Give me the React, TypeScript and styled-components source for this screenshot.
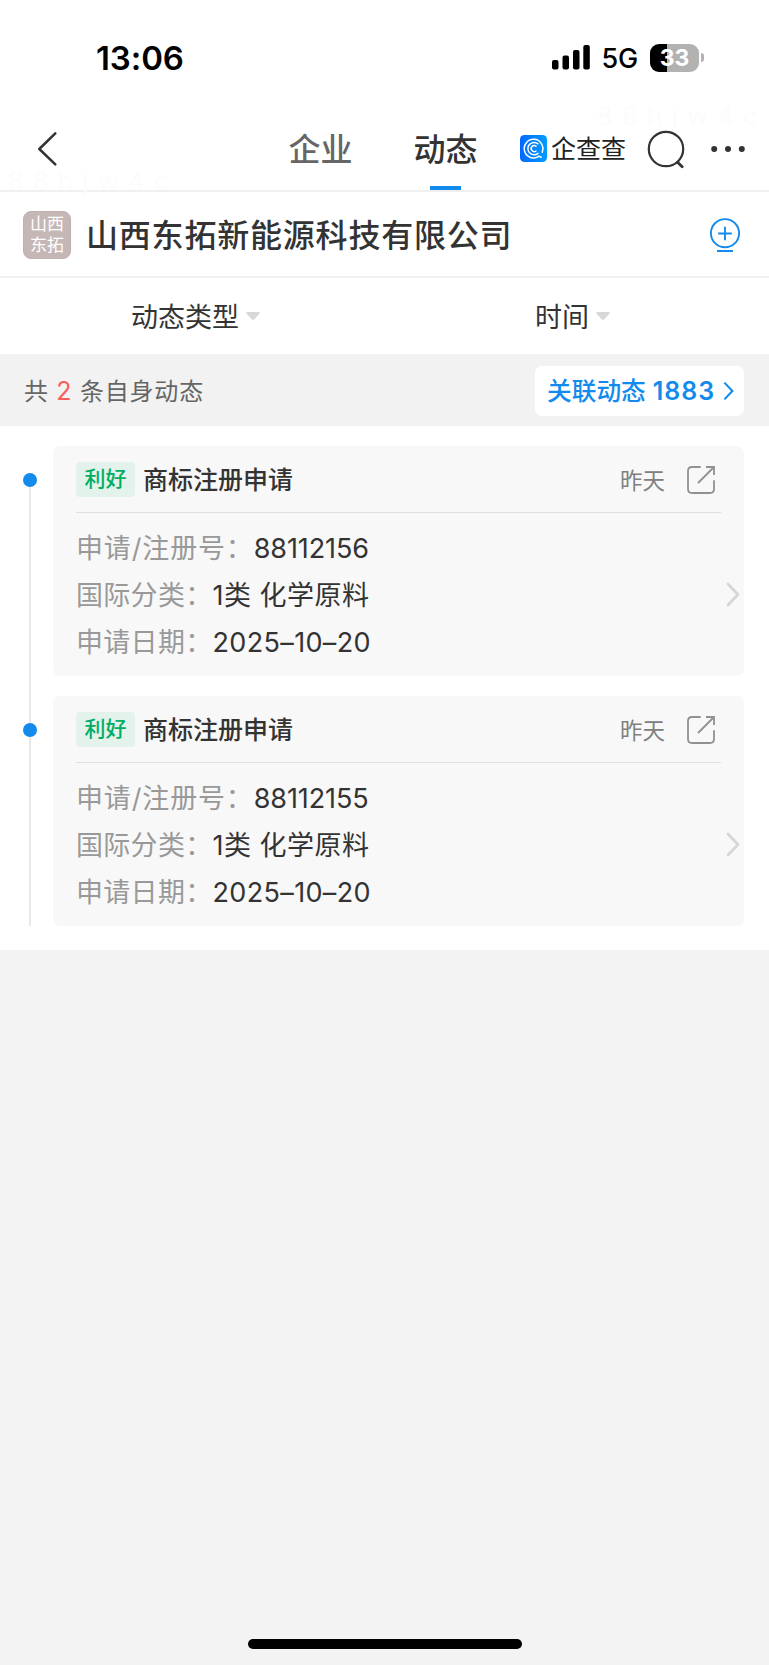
import React from "react";
import styled, { createGlobalStyle } from "styled-components";

const Global = createGlobalStyle`
  * { box-sizing: border-box; }
  html, body { margin: 0; padding: 0; background: #f3f3f3; }
  body { font-family: Inter, "Noto Sans CJK SC", sans-serif; color: #333; }
  svg { flex: none; }
`;

const blue = "#128bed";

const Screen = styled.div`
  width: 769px;
  height: 1665px;
  display: flex;
  flex-direction: column;
  background: #f3f3f3;
  overflow: hidden;
  position: relative;
  white-space: nowrap;
`;

const StatusBar = styled.div`
  height: 106px;
  flex: none;
  padding: 9px 65px 0 96px;
  display: flex;
  align-items: center;
  justify-content: space-between;
  background: #fff;
  color: #000;
`;

const Clock = styled.div`
  font-size: 33px;
  font-weight: 600;
  letter-spacing: -0.1px;
`;

const StatusIcons = styled.div`
  display: flex;
  align-items: center;
`;

const Network = styled.span`
  font-size: 27px;
  font-weight: 500;
  letter-spacing: -0.2px;
  margin: 2px 12px 0 12px;
`;

const Battery = styled.div`
  width: 49px;
  height: 28px;
  border-radius: 9px;
  background: linear-gradient(90deg, #000 0 16.5px, #b2b2b2 16.5px);
  color: #fff;
  font-size: 23px;
  font-weight: 700;
  line-height: 28px;
  text-align: center;
`;

const BatteryTip = styled.div`
  width: 3px;
  height: 9px;
  margin-left: 2px;
  border-radius: 0 3px 3px 0;
  background: #b2b2b2;
`;

const NavBar = styled.div`
  height: 86px;
  flex: none;
  display: flex;
  background: #fff;
  border-bottom: 2px solid #f0f0f0;
`;

const BackButton = styled.div`
  width: 258px;
  padding: 25px 0 0 37px;
`;

const Tab = styled.div<{ $active?: boolean }>`
  width: 125px;
  display: flex;
  flex-direction: column;
  align-items: center;
  justify-content: space-between;
  font-size: 32px;
  line-height: 46px;
  font-weight: 500;
  padding-top: 21px;
  color: ${(p) => (p.$active ? "#333" : "#666")};
  &::after {
    content: "";
    width: 31px;
    height: 4px;
    background: ${(p) => (p.$active ? blue : "transparent")};
  }
`;

const NavActions = styled.div`
  display: flex;
  align-items: center;
  height: 85px;
  padding-left: 12px;
`;

const BrandName = styled.span`
  width: 76px;
  margin: 0 19px 0 4px;
  font-size: 25px;
  line-height: 30px;
  color: #222;
`;

const SearchButton = styled.div`
  display: flex;
  margin-right: 24px;
`;

const CompanyBar = styled.div`
  height: 86px;
  flex: none;
  display: flex;
  align-items: center;
  padding: 1px 28px 0 23px;
  background: #fff;
  border-bottom: 2px solid #f0f0f0;
`;

const Avatar = styled.div`
  width: 48px;
  height: 48px;
  border-radius: 8px;
  border: 1px solid #bfb0b0;
  background: #c6b7b7;
  color: #fff;
  font-size: 17px;
  line-height: 21px;
  padding-top: 2px;
  text-align: center;
`;

const CompanyName = styled.h1`
  margin: 3px auto 0 15px;
  font-size: 32px;
  line-height: 46px;
  letter-spacing: 0.8px;
  font-weight: 500;
`;

const Filters = styled.div`
  height: 76px;
  flex: none;
  display: flex;
  padding-left: 131px;
  background: #fff;
`;

const Filter = styled.div`
  width: 404px;
  flex: none;
  display: flex;
  align-items: center;
  gap: 7px;
  font-size: 27px;
`;

const FilterName = styled.span`
  margin-top: -2px;
`;

const SummaryBar = styled.div`
  height: 72px;
  flex: none;
  display: flex;
  align-items: center;
  justify-content: space-between;
  padding: 0 25px 0 24px;
  background: #f2f2f2;
  color: #666;
  font-size: 24px;
`;

const Count = styled.em`
  font-style: normal;
  color: #fc5c5c;
  font-size: 25px;
`;

const Summary = styled.span`
  letter-spacing: 0.8px;
  margin-top: -2px;
`;

const RelatedButton = styled.div`
  width: 209px;
  height: 50px;
  margin-top: 1px;
  border-radius: 7px;
  background: #fff;
  color: ${blue};
  display: flex;
  align-items: center;
  padding-left: 12px;
  font-weight: 500;
  font-size: 24.7px;
`;

const RelatedLabel = styled.span`
  margin-top: -3px;
`;

const RelatedCount = styled.span`
  width: 70px;
  margin-left: 7px;
  font-weight: 600;
  font-size: 25px;
  letter-spacing: 1px;
`;

const Timeline = styled.div`
  flex: none;
  background: #fff;
  padding: 20px 25px 24px 23px;
`;

const Entry = styled.div`
  display: flex;
  gap: 16px;
  &:not(:last-child) { padding-bottom: 20px; }
  &:not(:last-child) > :first-child { margin-bottom: -47px; }
`;

const Rail = styled.div`
  width: 14px;
  margin-top: 27px;
  display: flex;
  flex-direction: column;
  align-items: center;
  &::before {
    content: "";
    width: 14px;
    height: 14px;
    border-radius: 50%;
    background: ${blue};
  }
  &::after {
    content: "";
    flex: 1;
    width: 2px;
    background: #e9e9e9;
  }
`;

const Card = styled.div`
  width: 691px;
  height: 230px;
  border-radius: 7px;
  background: #f8f8f8;
  padding: 0 23px;
`;

const CardHead = styled.div`
  height: 67px;
  display: flex;
  align-items: center;
  padding-right: 6px;
  border-bottom: 1px solid #dfdfdf;
`;

const Tag = styled.span`
  width: 59px;
  height: 35px;
  border-radius: 4px;
  background: #e3f2eb;
  color: #00ad65;
  font-size: 21px;
  line-height: 34px;
  font-weight: 500;
  text-align: center;
`;

const CardTitle = styled.span`
  margin: -2px auto 0 8px;
  font-size: 25px;
  font-weight: 500;
`;

const When = styled.span`
  margin: 0 22px 0 0;
  font-size: 22.5px;
  color: #808080;
`;

const ShareButton = styled.span`
  display: flex;
  margin-top: 2px;
`;

const CardBody = styled.div`
  display: flex;
  align-items: center;
  justify-content: space-between;
  padding-top: 12px;
  margin-right: -19px;
`;

const Field = styled.div`
  height: 47px;
  line-height: 47px;
  font-size: 27px;
  display: flex;
`;

const Label = styled.span<{ $spacing?: number }>`
  color: #999;
  letter-spacing: ${(p) => p.$spacing ?? 0.3}px;
`;

const Value = styled.span<{ $spacing?: number }>`
  letter-spacing: ${(p) => p.$spacing ?? 0}px;
`;

const ArrowSlot = styled.span`
  display: flex;
  margin-bottom: 3px;
`;

const HomeIndicator = styled.div`
  width: 274px;
  height: 10px;
  border-radius: 5px;
  background: #000;
  margin: auto auto 16px 247.5px;
`;

const Watermark = styled.span<{ $x: number; $y: number }>`
  position: absolute;
  left: ${(p) => p.$x}px;
  top: ${(p) => p.$y}px;
  font-size: 25px;
  line-height: 30px;
  letter-spacing: 9.6px;
  color: #fcfcfc;
`;

const SignalIcon = () => (
  <svg width="38" height="25" viewBox="0 0 38 25">
    <rect x="0" y="15" width="6.5" height="9.5" rx="2" />
    <rect x="10.5" y="10.5" width="6.5" height="14" rx="2" />
    <rect x="21" y="5" width="6.5" height="19.5" rx="2" />
    <rect x="31.3" y="0" width="6.5" height="24.5" rx="2" />
  </svg>
);

const BackIcon = () => (
  <svg width="20" height="36" viewBox="0 0 20 36" fill="none" stroke="#333" strokeWidth="2.5" strokeLinecap="round" strokeLinejoin="round">
    <path d="M18.3 2.3 2.3 18 18.3 33.3" />
  </svg>
);

const BrandIcon = () => (
  <svg width="27" height="27" viewBox="0 0 27 27" fill="none" stroke="#fff" strokeWidth="1.5" strokeLinecap="round">
    <defs>
      <linearGradient id="brand" x1="0" x2="1">
        <stop offset="0" stopColor="#0068ff" />
        <stop offset="1" stopColor="#009dff" />
      </linearGradient>
    </defs>
    <rect width="27" height="27" rx="4.5" fill="url(#brand)" stroke="none" />
    <path d="M19 21.2A9.3 9.3 0 1 1 22.2 17.1M19 21.2l2.2 1" />
    <path d="M18 8.8A6.2 6.2 0 1 0 18 18.4" />
    <path d="M16 11.2A3 3 0 1 0 16 16" />
  </svg>
);

const SearchIcon = () => (
  <svg width="40" height="40" viewBox="0 0 40 40" fill="none" stroke="#333" strokeWidth="2.2" strokeLinecap="round">
    <circle cx="20" cy="20" r="17.2" />
    <path d="M31.6 33.2 36.2 37.8" strokeWidth="2.8" />
  </svg>
);

const MoreIcon = () => (
  <svg width="36" height="8" viewBox="0 0 36 8" fill="#333">
    <circle cx="4.2" cy="4" r="3" />
    <circle cx="18" cy="4" r="3" />
    <circle cx="31.8" cy="4" r="3" />
  </svg>
);

const FollowIcon = () => (
  <svg width="32" height="36" viewBox="0 0 32 36" fill="none" stroke={blue} strokeWidth="1.9">
    <circle cx="16" cy="16.2" r="14.1" />
    <path d="M9.2 16.5H22.8M16 9.7V23.3M8 34H24" />
  </svg>
);

const CaretIcon = () => (
  <svg width="14" height="8" viewBox="0 0 14 8" fill="#d8d8d8">
    <path d="M.8 0H13.2Q14.4.6 13.6 1.6L8.3 7.2Q7 8.4 5.7 7.2L.4 1.6Q-.4.6.8 0Z" />
  </svg>
);

const RelatedArrow = () => (
  <svg width="11" height="20" viewBox="0 0 11 20" fill="none" stroke={blue} strokeWidth="2.1">
    <path d="M1.4 1.6 9.4 10 1.4 18.4" />
  </svg>
);

const ShareIcon = () => (
  <svg width="28" height="28" viewBox="0 0 28 28" fill="none" stroke="#919191" strokeWidth="1.8">
    <path d="M13.7 1H5Q1 1 1 5V23Q1 27 5 27H23Q27 27 27 23V14.3" />
    <path d="M19 1H27V9M27 1 11 17" />
  </svg>
);

const CardArrow = () => (
  <svg width="14" height="25" viewBox="0 0 14 25" fill="none" stroke="#d6d6d6" strokeWidth="2.7" strokeLinecap="round" strokeLinejoin="round">
    <path d="M2 2 12 12.5 2 23" />
  </svg>
);

const records = ["88112156", "88112155"];

export default function App() {
  return (
    <Screen>
      <Global />
      <StatusBar>
        <Clock>13:06</Clock>
        <StatusIcons>
          <SignalIcon />
          <Network>5G</Network>
          <Battery>33</Battery>
          <BatteryTip />
        </StatusIcons>
      </StatusBar>
      <NavBar>
        <BackButton><BackIcon /></BackButton>
        <Tab>企业</Tab>
        <Tab $active>动态</Tab>
        <NavActions>
          <BrandIcon />
          <BrandName>企查查</BrandName>
          <SearchButton><SearchIcon /></SearchButton>
          <MoreIcon />
        </NavActions>
      </NavBar>
      <CompanyBar>
        <Avatar>山西<br />东拓</Avatar>
        <CompanyName>山西东拓新能源科技有限公司</CompanyName>
        <FollowIcon />
      </CompanyBar>
      <Filters>
        <Filter><FilterName>动态类型</FilterName><CaretIcon /></Filter>
        <Filter><FilterName>时间</FilterName><CaretIcon /></Filter>
      </Filters>
      <SummaryBar>
        <Summary>共 <Count>2</Count> 条自身动态</Summary>
        <RelatedButton>
          <RelatedLabel>关联动态</RelatedLabel>
          <RelatedCount>1883</RelatedCount>
          <RelatedArrow />
        </RelatedButton>
      </SummaryBar>
      <Timeline>
        {records.map((id) => (
          <Entry key={id}>
            <Rail />
            <Card>
              <CardHead>
                <Tag>利好</Tag>
                <CardTitle>商标注册申请</CardTitle>
                <When>昨天</When>
                <ShareButton><ShareIcon /></ShareButton>
              </CardHead>
              <CardBody>
                <div>
                  <Field><Label $spacing={0.85}>申请/注册号：</Label><Value $spacing={-0.1}>{id}</Value></Field>
                  <Field><Label>国际分类：</Label><Value $spacing={0.5}>1类 化学原料</Value></Field>
                  <Field><Label>申请日期：</Label><Value $spacing={0.35}>2025–10–20</Value></Field>
                </div>
                <ArrowSlot><CardArrow /></ArrowSlot>
              </CardBody>
            </Card>
          </Entry>
        ))}
      </Timeline>
      <HomeIndicator />
      <Watermark $x={8} $y={166}>88hjw4c</Watermark>
      <Watermark $x={597} $y={101}>88hjw4c</Watermark>
    </Screen>
  );
}
